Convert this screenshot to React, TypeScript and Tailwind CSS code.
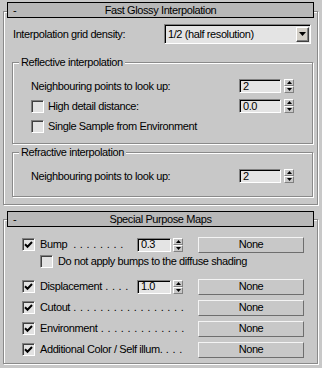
import React from "react";

function Check({ checked }: { checked?: boolean }) {
  return (
    <div className="w-[13px] h-[13px] shrink-0 bg-[#e2e2e2] border border-t-[#808080] border-l-[#808080] border-r-white border-b-white shadow-[inset_1px_1px_0_#404040] flex items-center justify-center">
      {checked && (
        <svg width="9" height="9" viewBox="0 0 9 9" className="block">
          <path d="M1 4.2 L3.5 6.7 L8 2" stroke="#000" strokeWidth="2" fill="none" />
        </svg>
      )}
    </div>
  );
}

function Spin() {
  return (
    <div className="w-[10px] h-[14px] shrink-0 flex flex-col bg-[#c8c8c8]">
      <div className="h-[7px] border border-t-white border-l-white border-r-[#808080] border-b-[#808080] flex items-center justify-center">
        <svg width="5" height="3" viewBox="0 0 5 3" className="block">
          <path d="M2.5 0L5 3H0Z" fill="#000" />
        </svg>
      </div>
      <div className="h-[7px] border border-t-white border-l-white border-r-[#808080] border-b-[#808080] flex items-center justify-center">
        <svg width="5" height="3" viewBox="0 0 5 3" className="block">
          <path d="M0 0H5L2.5 3Z" fill="#000" />
        </svg>
      </div>
    </div>
  );
}

function FieldWide({ value }: { value: string }) {
  return (
    <div className="w-[42px] h-[14px] shrink-0 bg-[#e4e4e4] border border-t-[#808080] border-l-[#808080] border-r-white border-b-white shadow-[inset_1px_1px_0_#000] flex items-center pl-[3px] leading-none">
      {value}
    </div>
  );
}

function FieldNarrow({ value }: { value: string }) {
  return (
    <div className="w-[34px] h-[14px] shrink-0 bg-[#e4e4e4] border border-t-[#808080] border-l-[#808080] border-r-white border-b-white shadow-[inset_1px_1px_0_#000] flex items-center pl-[3px] leading-none">
      {value}
    </div>
  );
}

function NoneBtn() {
  return (
    <div className="w-[106px] h-[16px] shrink-0 bg-[#c8c8c8] border border-t-[#f4f4f4] border-l-[#f4f4f4] border-b-[#6e6e6e] border-r-[#6e6e6e] flex items-center justify-center leading-none">
      None
    </div>
  );
}

function Header({ title }: { title: string }) {
  return (
    <div className="relative z-10 mx-[4px] h-[16px] bg-[#b8b8b8] border border-black grid grid-cols-[24px_1fr_24px] items-center leading-none">
      <span className="pl-[5px]">-</span>
      <span className="text-center">{title}</span>
      <span />
    </div>
  );
}

function Dots({ text }: { text: string }) {
  return <span className="tracking-[0.3px]">{text}</span>;
}

function MapRow({ label, dots }: { label: string; dots: string }) {
  return (
    <div className="h-[21px] flex items-center pl-[18px]">
      <Check checked />
      <div className="ml-[5px] w-[146px] whitespace-nowrap">
        {label}
        <Dots text={dots} />
      </div>
      <div className="ml-[12px]">
        <NoneBtn />
      </div>
    </div>
  );
}

export default function App() {
  return (
    <div className="w-[322px] h-[368px] overflow-hidden bg-[#c8c8c8] pt-[2px] text-black text-[11px] tracking-[-0.4px] font-['Liberation_Sans',Arial,sans-serif]">
      {/* Rollout 1 */}
      <div className="ml-[3px] w-[315px]">
        <Header title="Fast Glossy Interpolation" />
        <div className="-mt-[7px] border border-[#8a8a8a] shadow-[inset_1px_1px_0_#fff,1px_1px_0_#fff] pt-[12px] pb-[7px] pl-[8px] pr-[4px]">
          <div className="h-[20px] flex items-center justify-between">
            <span className="ml-[1px]">Interpolation grid density:</span>
            <div className="mr-[2px] w-[147px] h-[20px] bg-[#e4e4e4] border border-t-[#808080] border-l-[#808080] border-b-white border-r-white shadow-[inset_1px_1px_0_#000] flex items-center pl-[3px] pr-[1px]">
              <span className="flex-1">1/2 (half resolution)</span>
              <div className="w-[13px] h-[15px] bg-[#d4d0c8] border border-t-white border-l-white border-b-[#404040] border-r-[#404040] shadow-[inset_-1px_-1px_0_#808080] flex items-center justify-center">
                <svg width="7" height="4" viewBox="0 0 7 4" className="block">
                  <path d="M0 0H7L3.5 4Z" fill="#000" />
                </svg>
              </div>
            </div>
          </div>

          <div className="relative mt-[18px] border border-[#8a8a8a] shadow-[inset_1px_1px_0_#fff,1px_1px_0_#fff] pt-[13px] pb-[7px] pl-[18px] pr-[18px]">
            <span className="absolute -top-[7px] left-[6px] px-[2px] bg-[#c8c8c8] leading-[13px]">Reflective interpolation</span>
            <div className="h-[20px] flex items-center">
              <span className="flex-1">Neighbouring points to look up:</span>
              <FieldWide value="2" />
              <div className="ml-[3px]">
                <Spin />
              </div>
            </div>
            <div className="h-[20px] flex items-center">
              <Check />
              <span className="ml-[4px] flex-1">High detail distance:</span>
              <FieldWide value="0.0" />
              <div className="ml-[3px]">
                <Spin />
              </div>
            </div>
            <div className="h-[20px] flex items-center">
              <Check />
              <span className="ml-[4px]">Single Sample from Environment</span>
            </div>
          </div>

          <div className="relative mt-[8px] border border-[#8a8a8a] shadow-[inset_1px_1px_0_#fff,1px_1px_0_#fff] pt-[13px] pb-[10px] pl-[18px] pr-[18px]">
            <span className="absolute -top-[7px] left-[6px] px-[2px] bg-[#c8c8c8] leading-[13px]">Refractive interpolation</span>
            <div className="h-[20px] flex items-center">
              <span className="flex-1">Neighbouring points to look up:</span>
              <FieldWide value="2" />
              <div className="ml-[3px]">
                <Spin />
              </div>
            </div>
          </div>
        </div>
      </div>

      {/* Rollout 2 */}
      <div className="ml-[3px] w-[315px] mt-[6px]">
        <Header title="Special Purpose Maps" />
        <div className="-mt-[8px] border border-[#8a8a8a] shadow-[inset_1px_1px_0_#fff,1px_1px_0_#fff] pt-[14px] pb-[3px]">
          <div className="h-[21px] flex items-center pl-[18px]">
            <Check checked />
            <div className="ml-[5px] w-[97px] whitespace-nowrap">
              Bump&nbsp;
              <Dots text=" . . . . . . . ." />
            </div>
            <FieldNarrow value="0.3" />
            <div className="ml-[2px]">
              <Spin />
            </div>
            <div className="ml-[15px]">
              <NoneBtn />
            </div>
          </div>
          <div className="h-[21px] flex items-start pl-[36px]">
            <div className="h-[13px] flex items-center">
              <Check />
              <span className="ml-[5px]">Do not apply bumps to the diffuse shading</span>
            </div>
          </div>
          <div className="h-[21px] flex items-center pl-[18px]">
            <Check checked />
            <div className="ml-[5px] w-[97px] whitespace-nowrap">
              Displacement
              <Dots text=" . . . ." />
            </div>
            <FieldNarrow value="1.0" />
            <div className="ml-[2px]">
              <Spin />
            </div>
            <div className="ml-[15px]">
              <NoneBtn />
            </div>
          </div>
          <MapRow label="Cutout" dots=" . . . . . . . . . . . . . . . . ." />
          <MapRow label="Environment" dots=" . . . . . . . . . . . . ." />
          <MapRow label="Additional Color / Self illum." dots=" . . ." />
        </div>
      </div>
    </div>
  );
}
